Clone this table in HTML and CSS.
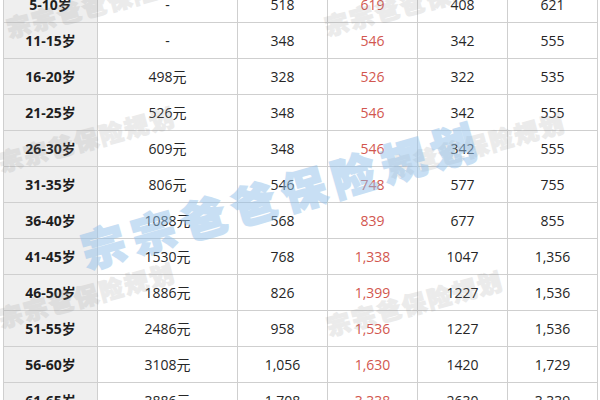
FILE: index.html
```html
<!DOCTYPE html>
<html lang="zh">
<head>
<meta charset="utf-8">
<link rel="stylesheet" href="styles.css">
</head>
<body>
<div class="sheet">
  <table class="rates">
    <colgroup>
      <col class="c-age"><col class="c-base"><col class="c-n"><col class="c-n"><col class="c-n"><col class="c-n">
    </colgroup>
    <tbody>
      <tr><th>5-10岁</th><td>-</td><td>518</td><td class="red">619</td><td>408</td><td>621</td></tr>
      <tr><th>11-15岁</th><td>-</td><td>348</td><td class="red">546</td><td>342</td><td>555</td></tr>
      <tr><th>16-20岁</th><td>498元</td><td>328</td><td class="red">526</td><td>322</td><td>535</td></tr>
      <tr><th>21-25岁</th><td>526元</td><td>348</td><td class="red">546</td><td>342</td><td>555</td></tr>
      <tr><th>26-30岁</th><td>609元</td><td>348</td><td class="red">546</td><td>342</td><td>555</td></tr>
      <tr><th>31-35岁</th><td>806元</td><td>546</td><td class="red">748</td><td>577</td><td>755</td></tr>
      <tr><th>36-40岁</th><td>1088元</td><td>568</td><td class="red">839</td><td>677</td><td>855</td></tr>
      <tr><th>41-45岁</th><td>1530元</td><td>768</td><td class="red">1,338</td><td>1047</td><td>1,356</td></tr>
      <tr><th>46-50岁</th><td>1886元</td><td>826</td><td class="red">1,399</td><td>1227</td><td>1,536</td></tr>
      <tr><th>51-55岁</th><td>2486元</td><td>958</td><td class="red">1,536</td><td>1227</td><td>1,536</td></tr>
      <tr><th>56-60岁</th><td>3108元</td><td>1,056</td><td class="red">1,630</td><td>1420</td><td>1,729</td></tr>
      <tr><th>61-65岁</th><td>3886元</td><td>1,708</td><td class="red">3,338</td><td>2630</td><td>3,339</td></tr>
    </tbody>
  </table>
  <div class="wm gray w1">宗宗爸爸保险规划</div>
  <div class="wm gray w2">宗宗爸爸保险规划</div>
  <div class="wm gray w3">宗宗爸保险规划</div>
  <div class="wm gray w4">宗爸爸保险规划</div>
  <div class="wm gray w5">宗宗爸保险规划</div>
  <div class="wm gray w6">宗宗爸保险规划</div>
  <div class="wm blue w7">宗宗爸爸保险规划</div>
</div>
</body>
</html>
```
FILE: styles.css
```css
html, body {
  margin: 0;
  padding: 0;
  background: #ffffff;
}
body {
  width: 600px;
  height: 400px;
  overflow: hidden;
  font-family: "Open Sans", "Noto Sans CJK SC", sans-serif;
}
.sheet {
  position: relative;
  width: 600px;
  height: 400px;
  overflow: hidden;
}
.rates {
  border-collapse: collapse;
  table-layout: fixed;
  width: 594px;
  margin: -14px 0 0 3px;
  font-size: 14px;
  color: #262626;
}
.c-age { width: 94px; }
.c-base { width: 140px; }
.c-n { width: 90px; }
.rates tr { height: 36px; }
.rates th,
.rates td {
  border: 1px solid #cfcfcf;
  padding: 0;
  text-align: center;
  vertical-align: middle;
  line-height: 20px;
}
.rates th {
  background: #efefef;
  font-weight: 700;
  color: #1e1e1e;
}
.rates td.red {
  color: #d2574f;
}
.wm {
  position: absolute;
  white-space: nowrap;
  font-family: "Noto Sans CJK SC", sans-serif;
  font-weight: 900;
  transform-origin: left bottom;
  pointer-events: none;
  line-height: 1;
}
.gray {
  font-size: 24px;
  letter-spacing: 2px;
  color: #8a8a8a;
  -webkit-text-stroke: 1.2px #8a8a8a;
  opacity: 0.16;
  transform: rotate(-15deg);
}
.blue {
  font-size: 44px;
  letter-spacing: 8px;
  color: #92c1ea;
  -webkit-text-stroke: 2px #92c1ea;
  opacity: 0.5;
  transform: rotate(-16deg);
}
.w1 { left: 10px; top: 16px; }
.w2 { left: 328px; top: 14px; }
.w3 { left: 2px; top: 150px; }
.w4 { left: 392px; top: 156px; }
.w5 { left: 2px; top: 306px; }
.w6 { left: 330px; top: 314px; }
.w7 { left: 88px; top: 228px; }
```
